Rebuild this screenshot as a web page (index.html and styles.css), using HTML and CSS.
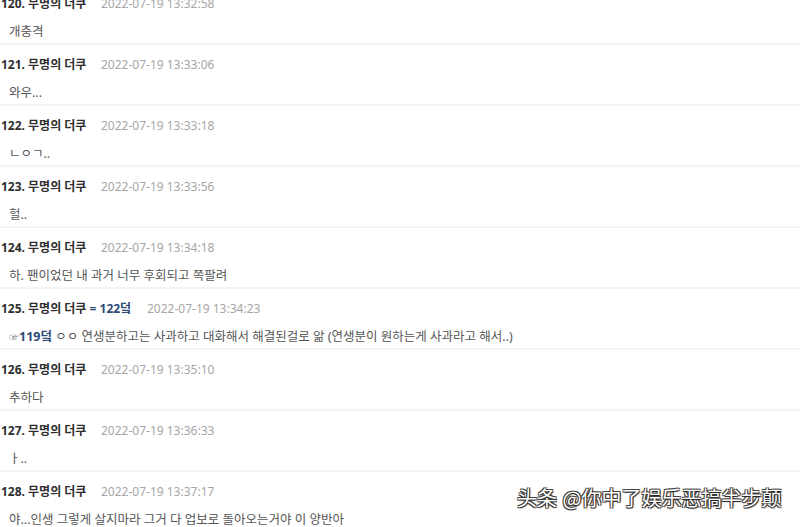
FILE: index.html
```html
<!DOCTYPE html>
<html lang="ko">
<head>
<meta charset="utf-8">
<link rel="stylesheet" href="styles.css">
</head>
<body>
<div class="list">
  <div class="row"><div class="head"><span class="name">120. 무명의 더쿠</span><span class="date">2022-07-19 13:32:58</span></div><div class="body">개충격</div></div>
  <div class="row"><div class="head"><span class="name">121. 무명의 더쿠</span><span class="date">2022-07-19 13:33:06</span></div><div class="body">와우...</div></div>
  <div class="row"><div class="head"><span class="name">122. 무명의 더쿠</span><span class="date">2022-07-19 13:33:18</span></div><div class="body">ㄴㅇㄱ..</div></div>
  <div class="row"><div class="head"><span class="name">123. 무명의 더쿠</span><span class="date">2022-07-19 13:33:56</span></div><div class="body">헐..</div></div>
  <div class="row"><div class="head"><span class="name">124. 무명의 더쿠</span><span class="date">2022-07-19 13:34:18</span></div><div class="body">하. 팬이었던 내 과거 너무 후회되고 쪽팔려</div></div>
  <div class="row"><div class="head"><span class="name">125. 무명의 더쿠 <span class="ref">= 122덬</span></span><span class="date">2022-07-19 13:34:23</span></div><div class="body"><span class="hand">☞</span><span class="ref">119덬</span> ㅇㅇ 연생분하고는 사과하고 대화해서 해결된걸로 앎 (연생분이 원하는게 사과라고 해서..)</div></div>
  <div class="row"><div class="head"><span class="name">126. 무명의 더쿠</span><span class="date">2022-07-19 13:35:10</span></div><div class="body">추하다</div></div>
  <div class="row"><div class="head"><span class="name">127. 무명의 더쿠</span><span class="date">2022-07-19 13:36:33</span></div><div class="body">ㅏ..</div></div>
  <div class="row"><div class="head"><span class="name">128. 무명의 더쿠</span><span class="date">2022-07-19 13:37:17</span></div><div class="body">야...인생 그렇게 살지마라 그거 다 업보로 돌아오는거야 이 양반아</div></div>
</div>
<div class="watermark">头条 @你中了娱乐恶搞半步颠</div>
</body>
</html>
```
FILE: styles.css
```css
html, body {
  margin: 0;
  padding: 0;
  background: #fff;
  overflow: hidden;
}
body {
  width: 800px;
  height: 527px;
  position: relative;
  font-family: "Noto Sans", "Noto Sans CJK KR", sans-serif;
  color: #333;
}
.list {
  margin-top: -18px;
}
.row {
  border-top: 2px solid #f4f4f4;
  padding: 11px 0 0;
  height: 48px;
}
.head {
  display: flex;
  align-items: center;
  height: 18px;
  padding-left: 1px;
}
.name {
  font-size: 12px;
  font-weight: 700;
  color: #2e2e2e;
  width: 100px;
  white-space: nowrap;
  line-height: 18px;
}
.row:nth-child(6) .name {
  width: 146px;
}
.ref {
  color: #2c4a75;
  font-weight: 700;
}
.date {
  font-size: 12px;
  color: #a6a6a6;
  line-height: 18px;
}
.body {
  margin-top: 10px;
  padding-left: 9px;
  font-size: 12.5px;
  line-height: 18px;
  color: #555;
  white-space: nowrap;
}
.body .ref {
  font-size: 12.5px;
}
.hand {
  font-size: 10px;
  color: #777;
}
.watermark {
  position: absolute;
  left: 517px;
  top: 483px;
  font-family: "Noto Sans CJK SC", sans-serif;
  font-size: 20px;
  color: #fff;
  text-shadow: 1px 1px 1px #222, -1px -1px 0 #444, 1px -1px 0 #444, -1px 1px 0 #444;
  white-space: nowrap;
}
```
